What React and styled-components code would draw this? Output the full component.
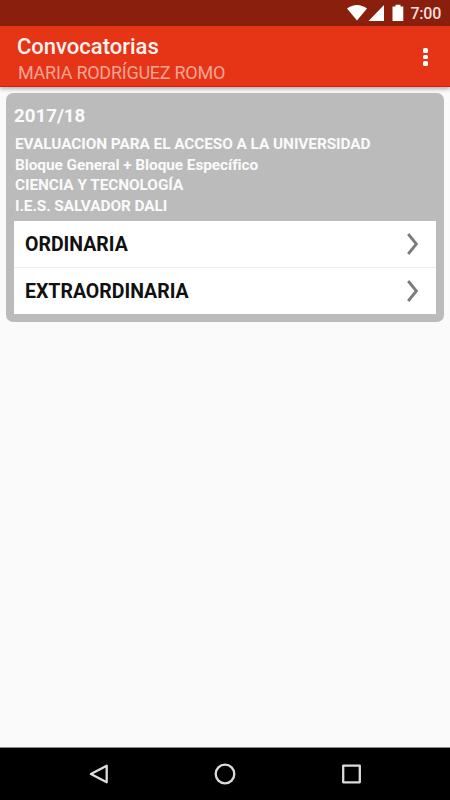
import styled, { createGlobalStyle } from "styled-components";

const theme = {
  primary: "#e53416",
  primaryDark: "#8b1f0d",
  card: "#bbbbbb",
  background: "#fafafa",
  subtitle: "#f7a496",
};

const GlobalStyle = createGlobalStyle`
  body {
    margin: 0;
    background: ${theme.background};
    font-family: Roboto, "Liberation Sans", sans-serif;
  }
`;

/* ================= SCREEN ================= */
const Screen = styled.div`
  width: 450px;
  height: 800px;
  display: flex;
  flex-direction: column;
  overflow: hidden;
  background: ${theme.background};
`;

/* ================= STATUS BAR ================= */
const StatusBar = styled.div`
  height: 26px;
  flex-shrink: 0;
  box-sizing: border-box;
  padding-right: 9px;
  display: flex;
  justify-content: flex-end;
  align-items: center;
  background: ${theme.primaryDark};
`;

const Time = styled.span`
  padding-top: 2px;
  margin-left: 7px;
  font-size: 16px;
  font-weight: 500;
  line-height: 26px;
  letter-spacing: -0.25px;
  color: #f5dedb;
`;

/* ================= TOOLBAR ================= */
const Toolbar = styled.header`
  height: 61px;
  flex-shrink: 0;
  box-sizing: border-box;
  padding: 8px 20px 0 18px;
  display: flex;
  justify-content: space-between;
  background: ${theme.primary};
  border-bottom: 1px solid #d31f0c;
  box-shadow: 0 2px 4px rgba(0, 0, 0, 0.3);
  z-index: 1;
`;

const Title = styled.h1`
  margin: 0 0 0 -1px;
  font-size: 22px;
  font-weight: 500;
  line-height: 26px;
  color: #fff3f0;
`;

const Subtitle = styled.div`
  font-size: 18px;
  line-height: 26px;
  letter-spacing: -0.26px;
  color: ${theme.subtitle};
`;

const MenuButton = styled.button`
  width: 9px;
  height: 46px;
  padding: 0;
  border: none;
  background: transparent;
  display: flex;
  flex-direction: column;
  align-items: center;
  justify-content: center;
  gap: 2px;
`;

const Dot = styled.span`
  width: 4.6px;
  height: 4.6px;
  border-radius: 1.5px;
  background: #fff;
`;

/* ================= CARD ================= */
const Content = styled.main`
  flex: 1;
  padding: 6px;
`;

const Card = styled.section`
  height: 229px;
  box-sizing: border-box;
  padding: 11px 8px 8px;
  border-radius: 7px;
  background: ${theme.card};
`;

const Year = styled.h2`
  margin: 0 0 6px;
  font-size: 18.7px;
  font-weight: 700;
  line-height: 24px;
  color: #fafafa;
`;

const Details = styled.div`
  height: 87px;
`;

const Detail = styled.div`
  padding-left: 1px;
  font-size: 15.4px;
  font-weight: 700;
  line-height: 20.7px;
  letter-spacing: -0.07px;
  white-space: nowrap;
  color: #fafafa;
`;

/* ================= LIST ================= */
const List = styled.div`
  background: #fff;
`;

const Row = styled.div`
  height: 46px;
  padding: 0 17px 0 11px;
  display: flex;
  align-items: center;
  justify-content: space-between;
  font-size: 19.5px;
  font-weight: 700;
  color: #111;

  & + & {
    border-top: 1px solid #eeeeee;
  }
`;

/* ================= NAVIGATION ================= */
const NavBar = styled.nav`
  height: 53px;
  flex-shrink: 0;
  box-sizing: border-box;
  padding: 0 87px 1px;
  display: flex;
  align-items: center;
  justify-content: space-between;
  background: #000;
  border-top: 1px solid #888;
`;

const details = [
  "EVALUACION PARA EL ACCESO A LA UNIVERSIDAD",
  "Bloque General + Bloque Específico",
  "CIENCIA Y TECNOLOGÍA",
  "I.E.S. SALVADOR DALI",
];

const calls = ["ORDINARIA", "EXTRAORDINARIA"];

const StatusIcons = () => (
  <svg width="58" height="26" viewBox="346 0 58 26" fill="#fff">
    <path d="M347 8.5C353 3.7 361 3.7 367 8.5L357 20.5Z" />
    <path d="M384 5V21H368.5Z" />
    <path d="M395.5 6.5V4.8h5v1.7h2.8V21h-10.8V6.5Z" />
  </svg>
);

const Chevron = () => (
  <svg width="12" height="24" viewBox="0 0 12 24" fill="none">
    <path d="M1.2 2L9.4 12L1.2 22" stroke="#7b7b7b" strokeWidth="2.8" />
  </svg>
);

const NavIcon = ({ children }) => (
  <svg
    width="24"
    height="24"
    viewBox="0 0 24 24"
    fill="none"
    stroke="#dcdcdc"
    strokeWidth="2.3"
    strokeLinejoin="round"
  >
    {children}
  </svg>
);

export default function App() {
  return (
    <>
      <GlobalStyle />
      <Screen>
        <StatusBar>
          <StatusIcons />
          <Time>7:00</Time>
        </StatusBar>

        <Toolbar>
          <div>
            <Title>Convocatorias</Title>
            <Subtitle>MARIA RODRÍGUEZ ROMO</Subtitle>
          </div>
          <MenuButton aria-label="Menú">
            <Dot />
            <Dot />
            <Dot />
          </MenuButton>
        </Toolbar>

        <Content>
          <Card>
            <Year>2017/18</Year>
            <Details>
              {details.map((text) => (
                <Detail key={text}>{text}</Detail>
              ))}
            </Details>
            <List>
              {calls.map((name) => (
                <Row key={name}>
                  {name}
                  <Chevron />
                </Row>
              ))}
            </List>
          </Card>
        </Content>

        <NavBar>
          <NavIcon>
            <path d="M3.9 12L19.7 3.7V20.3Z" />
          </NavIcon>
          <NavIcon>
            <circle cx="12" cy="12" r="9.3" />
          </NavIcon>
          <NavIcon>
            <path d="M4.2 3.7H20.8V20.3H4.2Z" />
          </NavIcon>
        </NavBar>
      </Screen>
    </>
  );
}
